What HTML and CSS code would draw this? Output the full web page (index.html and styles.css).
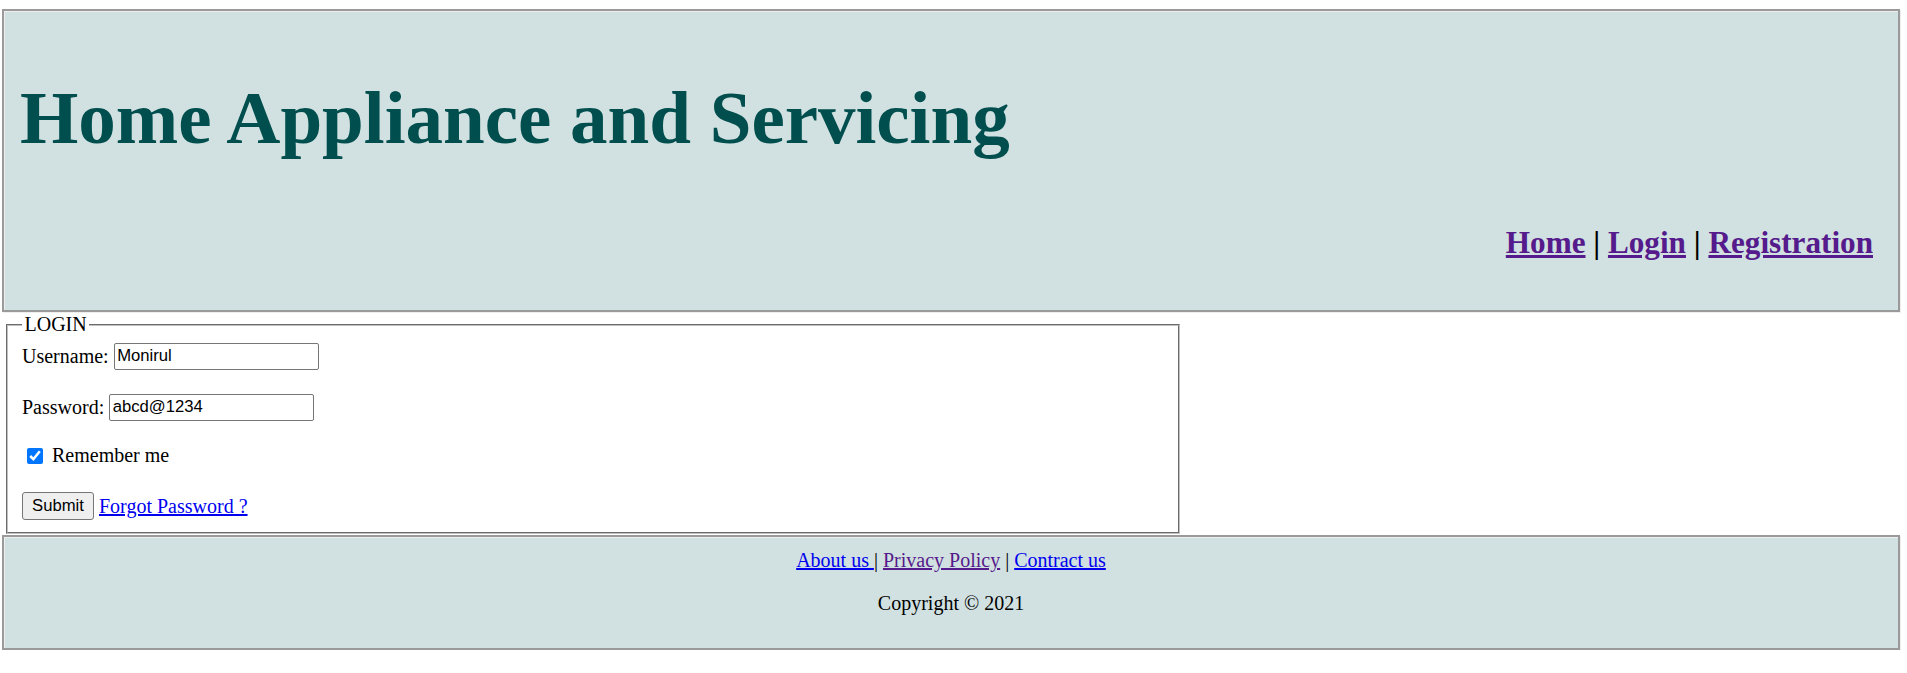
FILE: index.html
```html
<!DOCTYPE html>
<html>
<head>
<meta charset="utf-8">
<title>Home Appliance and Servicing</title>
<link rel="stylesheet" href="styles.css">
</head>
<body>
<div class="header">
  <h1 class="title">Home Appliance and Servicing</h1>
  <div class="nav"><a class="visited" href="#">Home</a> | <a class="visited" href="#">Login</a> | <a class="visited" href="#">Registration</a></div>
</div>
<form class="login-form">
  <fieldset class="login">
    <legend class="legend">LOGIN</legend>
    <div class="row">Username: <input class="field" type="text" value="Monirul"></div>
    <div class="row row-gap1">Password: <input class="field" type="text" value="abcd@1234"></div>
    <div class="row row-gap2"><input class="check" type="checkbox" checked> Remember me</div>
    <div class="row row-gap3"><button class="btn" type="button">Submit</button><a class="link forgot" href="#">Forgot Password ?</a></div>
  </fieldset>
</form>
<div class="footer">
  <p class="links"><a class="link" href="#">About us </a>| <a class="link visited" href="#">Privacy Policy</a> | <a class="link" href="#">Contract us</a></p>
  <p class="copy">Copyright © 2021</p>
</div>
</body>
</html>
```
FILE: styles.css
```css
html, body {
  margin: 0;
  padding: 0;
}
body {
  padding: 9px 7px 0 2px;
  font-family: "Liberation Serif", "Times New Roman", serif;
  font-size: 20px;
  color: #000;
  background: #fff;
}
a {
  color: #0000ee;
  text-decoration: underline;
}
a.visited {
  color: #551a8b;
}
.header {
  background: #d1e0e0;
  border: 2px solid #9a9a9a;
  box-shadow: inset 1px 1px 0 #eeeeee, 1px 1px 0 #eeeeee;
  padding: 64px 25px 49px 16px;
}
.title {
  margin: 0;
  font-size: 75px;
  line-height: 86px;
  font-weight: bold;
  color: #004e4e;
}
.nav {
  margin-top: 64px;
  text-align: right;
  font-size: 31.2px;
  line-height: 36px;
  font-weight: bold;
}
.login-form {
  margin: 1px 0 1px 2px;
}
.login {
  width: 1174px;
  box-sizing: border-box;
  margin: 0 2px;
  border: 2px groove #c0c0c0;
  padding: 6px 14px 12px 14px;
  min-width: 0;
}
.legend {
  padding: 0 2.5px;
  font-size: 20px;
  line-height: 23px;
}
.row {
  display: flex;
  align-items: center;
  height: 28px;
  white-space: pre;
  line-height: 23px;
}
.row-gap1 { margin-top: 23px; }
.row-gap2 { margin-top: 20.5px; }
.row-gap3 { margin-top: 22.5px; }
.field {
  box-sizing: border-box;
  width: 205px;
  height: 27px;
  margin: 0;
  padding: 1px 2.5px;
  border: 1px solid #767676;
  border-radius: 2px;
  font-family: "Liberation Sans", Arial, sans-serif;
  font-size: 16.67px;
  color: #000;
  background: #fff;
}
.check {
  width: 16px;
  height: 16px;
  margin: 0 4px 0 5px;
  accent-color: #0075ff;
}
.btn {
  box-sizing: border-box;
  width: 72px;
  height: 28px;
  margin: 0;
  padding: 0;
  border: 1px solid #767676;
  border-radius: 3px;
  background: #efefef;
  font-family: "Liberation Sans", Arial, sans-serif;
  font-size: 16.67px;
  color: #000;
}
.forgot {
  margin-left: 5px;
}
.footer {
  background: #d1e0e0;
  border: 2px solid #9a9a9a;
  box-shadow: inset 1px 1px 0 #eeeeee, 1px 1px 0 #eeeeee;
  padding: 12px 0 13px;
  text-align: center;
  line-height: 23px;
}
.links {
  margin: 0 0 20px;
}
.copy {
  margin: 0 0 20px;
}
```
